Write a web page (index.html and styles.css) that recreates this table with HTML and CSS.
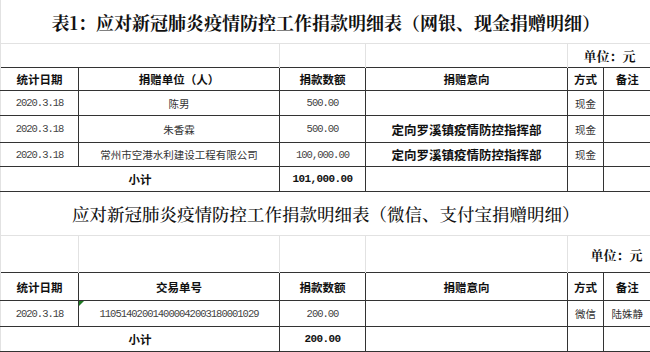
FILE: index.html
```html
<!DOCTYPE html>
<html lang="zh-CN">

<head>
    <meta charset="UTF-8">
    <meta name="viewport" content="width=device-width, initial-scale=1.0">
    <title>捐款明细表</title>
    <link rel="stylesheet" href="styles.css">
</head>

<body>
    <table class="sheet">
        <colgroup>
            <col class="c-date">
            <col class="c-name">
            <col class="c-amount">
            <col class="c-intent">
            <col class="c-way">
            <col class="c-note">
        </colgroup>

        <!-- 表1：网银、现金 -->
        <tr class="title-row">
            <td colspan="6" class="title">表1：应对新冠肺炎疫情防控工作捐款明细表（网银、现金捐赠明细）</td>
        </tr>
        <tr class="unit-row">
            <td colspan="2" class="grid"></td>
            <td class="grid"></td>
            <td class="grid"></td>
            <td colspan="2" class="grid unit unit-1">单位：元</td>
        </tr>
        <tr class="head-row">
            <td class="ruled">统计日期</td>
            <td class="ruled">捐赠单位（人）</td>
            <td class="ruled">捐款数额</td>
            <td class="ruled">捐赠意向</td>
            <td class="ruled">方式</td>
            <td class="ruled">备注</td>
        </tr>
        <tr class="data-row r1">
            <td class="ruled num">2020.3.18</td>
            <td class="ruled">陈男</td>
            <td class="ruled num">500.00</td>
            <td class="ruled"></td>
            <td class="ruled">现金</td>
            <td class="ruled"></td>
        </tr>
        <tr class="data-row r2">
            <td class="ruled num">2020.3.18</td>
            <td class="ruled">朱香霖</td>
            <td class="ruled num">500.00</td>
            <td class="ruled intent">定向罗溪镇疫情防控指挥部</td>
            <td class="ruled">现金</td>
            <td class="ruled"></td>
        </tr>
        <tr class="data-row r3">
            <td class="ruled num">2020.3.18</td>
            <td class="ruled">常州市空港水利建设工程有限公司</td>
            <td class="ruled num">100,000.00</td>
            <td class="ruled intent">定向罗溪镇疫情防控指挥部</td>
            <td class="ruled">现金</td>
            <td class="ruled"></td>
        </tr>
        <tr class="sum-row">
            <td colspan="2" class="ruled sum">小计</td>
            <td class="ruled num sum">101,000.00</td>
            <td class="ruled"></td>
            <td class="ruled"></td>
            <td class="ruled"></td>
        </tr>

        <!-- 表2：微信、支付宝 -->
        <tr class="title-row">
            <td colspan="6" class="title title-2">应对新冠肺炎疫情防控工作捐款明细表（微信、支付宝捐赠明细）</td>
        </tr>
        <tr class="unit-row unit-row-2">
            <td class="grid"></td>
            <td class="grid"></td>
            <td class="grid"></td>
            <td class="grid"></td>
            <td colspan="2" class="grid unit unit-2">单位：元</td>
        </tr>
        <tr class="head-row head-row-2">
            <td class="ruled">统计日期</td>
            <td class="ruled">交易单号</td>
            <td class="ruled">捐款数额</td>
            <td class="ruled">捐赠意向</td>
            <td class="ruled">方式</td>
            <td class="ruled">备注</td>
        </tr>
        <tr class="data-row r4">
            <td class="ruled num">2020.3.18</td>
            <td class="ruled num marked">110514020014000042003180001029</td>
            <td class="ruled num">200.00</td>
            <td class="ruled"></td>
            <td class="ruled">微信</td>
            <td class="ruled">陆姝静</td>
        </tr>
        <tr class="sum-row">
            <td colspan="2" class="ruled sum">小计</td>
            <td class="ruled num sum">200.00</td>
            <td class="ruled"></td>
            <td class="ruled"></td>
            <td class="ruled"></td>
        </tr>
    </table>
</body>

</html>
```

FILE: styles.css
```css
body {
    margin: 0;
    background: #fff;
    font-family: "Noto Sans CJK SC", sans-serif;
    color: #333;
}

.sheet {
    width: 650px;
    border-collapse: collapse;
    table-layout: fixed;
}

.c-date { width: 78px; }
.c-name { width: 201px; }
.c-amount { width: 86px; }
.c-intent { width: 202px; }
.c-way { width: 36px; }
.c-note { width: 47px; }

.sheet td {
    padding: 0;
    text-align: center;
    font-size: 10.5px;
    white-space: nowrap;
    overflow: hidden;
}

.sheet td:first-child {
    border-left: 1px solid #e2e2e2;
}

/* light excel gridlines */
.sheet .grid {
    border-left: 1px solid #e2e2e2;
}

.sheet .ruled {
    border: 1px solid #333;
}

.sheet td.ruled:first-child {
    border-left-color: #e2e2e2;
}

.sheet td.ruled:last-child {
    border-right: none;
}

.title-row td {
    height: 43px;
    border-bottom: 1px solid #e2e2e2;
}

.sheet .title {
    font-family: "Noto Serif CJK SC", "Noto Sans CJK SC", serif;
    font-size: 18px;
    font-weight: 700;
    color: #111;
}

.sheet .title-2 {
    font-size: 17.5px;
    font-weight: 500;
}

.unit-row td { height: 23px; }
.unit-row-2 td { height: 36px; }

.sheet .unit {
    text-align: right;
    font-family: "Noto Serif CJK SC", "Noto Sans CJK SC", serif;
    font-weight: 700;
    font-size: 13px;
    color: #111;
}

.sheet .unit-1 { padding-right: 15px; }
.sheet .unit-2 { padding-right: 8px; }

.head-row td {
    height: 22px;
    font-weight: 700;
    color: #111;
}

.sheet .head-row td {
    font-size: 11.5px;
}

.head-row-2 td { height: 27px; }

.r1 td { height: 24px; }
.r2 td { height: 26px; }
.r3 td { height: 23px; }
.r4 td { height: 25px; }

.sum-row td { height: 24px; }

.sheet .num {
    font-family: "Liberation Mono", monospace;
    font-size: 10.5px;
    letter-spacing: -1px;
    color: #444;
}

.sheet .sum {
    font-size: 11.5px;
    font-weight: 700;
    color: #111;
}

.sheet .num.sum {
    font-size: 11px;
    letter-spacing: -0.6px;
}

.sheet .intent {
    font-weight: 700;
    font-size: 12.5px;
    color: #111;
}

/* excel "number stored as text" marker */
.marked {
    position: relative;
}

.marked::before {
    content: "";
    position: absolute;
    top: 0;
    left: 0;
    border-top: 5px solid #1f7a23;
    border-right: 5px solid transparent;
}
```
